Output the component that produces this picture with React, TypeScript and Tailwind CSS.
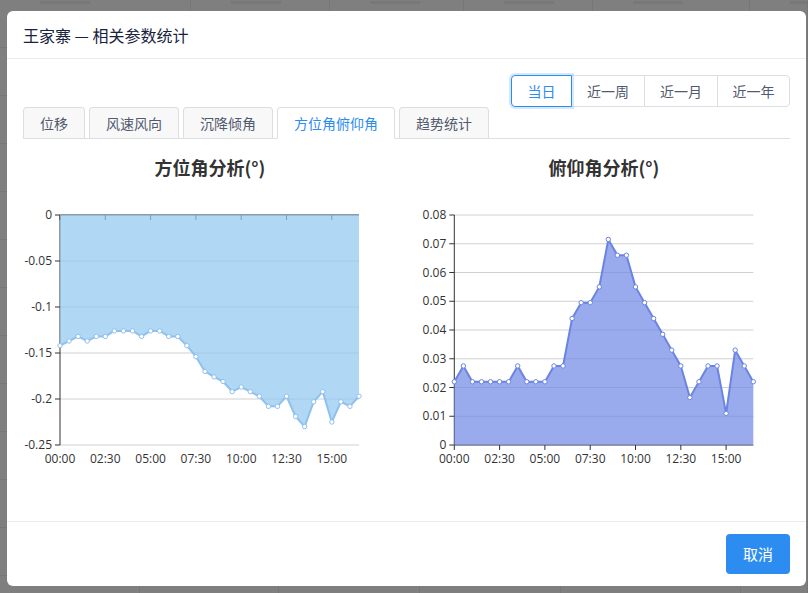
import React from 'react';

const leftData = [
  -0.142, -0.137, -0.132, -0.137, -0.132, -0.132, -0.126, -0.126, -0.126, -0.132, -0.126, -0.126,
  -0.132, -0.132, -0.142, -0.154, -0.17, -0.176, -0.181, -0.192, -0.187, -0.192, -0.197, -0.208,
  -0.208, -0.197, -0.219, -0.23, -0.203, -0.192, -0.225, -0.203, -0.208, -0.197,
];

const rightData = [
  0.022, 0.0275, 0.022, 0.022, 0.022, 0.022, 0.022, 0.0275, 0.022, 0.022, 0.022, 0.0275, 0.0275,
  0.044, 0.0495, 0.0495, 0.055, 0.0715, 0.066, 0.066, 0.055, 0.0495, 0.044, 0.0385, 0.033, 0.0275,
  0.0165, 0.022, 0.0275, 0.0275, 0.011, 0.033, 0.0275, 0.022,
];

const xLabels = ['00:00', '02:30', '05:00', '07:30', '10:00', '12:30', '15:00'];
const rangeBtns = [
  { label: '当日', w: 61 },
  { label: '近一周', w: 74 },
  { label: '近一月', w: 74 },
  { label: '近一年', w: 73 },
];
const tabs = ['位移', '风速风向', '沉降倾角', '方位角俯仰角', '趋势统计'];

const chartFont = '"Open Sans", "Noto Sans CJK SC", sans-serif';

interface ChartProps {
  title: string;
  data: number[];
  ox: number; // svg left in page coords
  width: number;
  axisX: number;
  min: number;
  max: number;
  ticks: number[];
  fmt: (v: number) => string;
  inverted: boolean; // area hangs from the top (negative values)
  fill: string;
  line: string;
  titleX: number;
}

const OY = 139;
const TOP = 215;
const BOTTOM = 445;

function Chart(p: ChartProps) {
  const right = p.axisX + 299;
  const step = (right - p.axisX) / (p.data.length - 1);
  const y = (v: number) => TOP + ((p.max - v) / (p.max - p.min)) * (BOTTOM - TOP);
  const pts = p.data.map((v, i) => [p.axisX + i * step, y(v)] as const);
  const linePts = pts.map(([a, b]) => `${a},${b}`).join(' ');
  const base = p.inverted ? TOP : BOTTOM;
  const areaPts = `${p.axisX},${base} ${linePts} ${right},${base}`;
  const axisColor = '#333';

  return (
    <svg width={p.width} height={382} className="block shrink-0">
      <g transform={`translate(${-p.ox}, ${-OY})`} fontFamily={chartFont}>
        <text
          x={p.titleX}
          y={175}
          textAnchor="middle"
          fontSize={18}
          fontWeight={700}
          fill="#333"
          fontFamily='"Noto Sans CJK SC", "Open Sans", sans-serif'
        >
          {p.title}
        </text>

        {/* grid */}
        {p.ticks.map((t) => {
          const isAxis = p.inverted ? t === p.max : t === p.min;
          return isAxis ? null : (
            <line key={t} x1={p.axisX} x2={right} y1={y(t)} y2={y(t)} stroke="#d0d0d0" strokeWidth={1} />
          );
        })}

        {/* axes */}
        <line x1={p.axisX} x2={p.axisX} y1={TOP} y2={BOTTOM} stroke={axisColor} strokeWidth={1} />
        <line x1={p.axisX} x2={right} y1={base} y2={base} stroke={axisColor} strokeWidth={1} />
        {p.ticks.map((t) => (
          <line key={t} x1={p.axisX - 5} x2={p.axisX} y1={y(t)} y2={y(t)} stroke={axisColor} />
        ))}
        {xLabels.map((l, i) => {
          const x = p.axisX + i * 5 * step;
          return <line key={l} x1={x} x2={x} y1={base} y2={base + 5} stroke={axisColor} />;
        })}

        {/* series */}
        <polygon points={areaPts} fill={p.fill} fillOpacity={0.72} />
        <polyline points={linePts} fill="none" stroke={p.line} strokeWidth={2} strokeLinejoin="round" />
        {pts.map(([a, b], i) => (
          <circle key={i} cx={a} cy={b} r={2.2} fill="#fff" stroke={p.line} strokeWidth={1} />
        ))}

        {/* labels */}
        {p.ticks.map((t) => (
          <text key={t} x={p.axisX - 8} y={y(t) + 4} textAnchor="end" fontSize={12} fill="#333">
            {p.fmt(t)}
          </text>
        ))}
        {xLabels.map((l, i) => (
          <text key={l} x={p.axisX + i * 5 * step} y={463} textAnchor="middle" fontSize={12} fill="#333">
            {l}
          </text>
        ))}
      </g>
    </svg>
  );
}

const fmtNum = (v: number) => (v === 0 ? '0' : String(parseFloat(v.toFixed(3))));

export default function App() {
  const topCells = [191, 139, 134, 129, 157, 58];
  const rowCells = [140, 139, 141, 141, 180, 67];

  return (
    <div
      className="relative h-[593px] w-[808px] overflow-hidden bg-[#7f7f7f]"
      style={{ fontFamily: '"Noto Sans CJK SC", "Noto Sans", sans-serif' }}
    >
      {/* page behind the mask */}
      <div className="flex flex-col">
        <div className="flex h-[48px] border-b border-[#767676]">
          {topCells.map((w, i) => (
            <div key={i} style={{ width: w }} className="flex items-start border-r border-[#777] pl-[40px]">
              <div className="mt-[1px] h-[3px] w-[50px] bg-[#787878]" />
            </div>
          ))}
        </div>
        {Array.from({ length: 12 }).map((_, r) => (
          <div key={r} className="flex h-[48px] border-b border-[#777]">
            {rowCells.map((w, i) => (
              <div key={i} style={{ width: w }} className="border-r border-[#767676]" />
            ))}
          </div>
        ))}
      </div>

      {/* modal */}
      <div className="absolute left-[7px] top-[11px] flex h-[575px] w-[799px] flex-col rounded-[6px] bg-white">
        <div className="flex h-[48px] items-center border-b border-[#e8eaec] px-[16px] text-[16px] text-[#17233d]">
          王家寨 — 相关参数统计
        </div>

        <div className="flex h-[462px] flex-col px-[16px] pt-[16px]">
          <div className="flex justify-end">
            <div className="flex h-[32px] rounded-[4px]">
              {rangeBtns.map((b, i) => {
                const active = i === 0;
                return (
                  <div
                    key={b.label}
                    style={{ width: b.w }}
                    className={
                      active
                        ? 'relative z-10 flex items-center justify-center rounded-l-[4px] border border-[#2d8cf0] text-[14px] text-[#2d8cf0] shadow-[0_0_0_2px_rgba(45,140,240,0.2)]'
                        : i === 3
                          ? '-ml-px flex items-center justify-center rounded-r-[4px] border border-[#dcdee2] text-[14px] text-[#515a6e]'
                          : '-ml-px flex items-center justify-center border border-[#dcdee2] text-[14px] text-[#515a6e]'
                    }
                  >
                    {b.label}
                  </div>
                );
              })}
            </div>
          </div>

          <div className="flex h-[32px] items-end gap-[4px] border-b border-[#dcdee2]">
            {tabs.map((t, i) => {
              const active = i === 3;
              return (
                <div
                  key={t}
                  className={
                    active
                      ? '-mb-px flex h-[32px] items-center rounded-t-[4px] border border-b-white border-[#dcdee2] bg-white px-[16px] text-[14px] text-[#2d8cf0]'
                      : 'flex h-[31px] items-center rounded-t-[4px] border border-b-0 border-[#dcdee2] bg-[#f8f8f9] px-[16px] text-[14px] text-[#515a6e]'
                  }
                >
                  {t}
                </div>
              );
            })}
          </div>

          <div className="flex">
            <Chart
              title="方位角分析(°)"
              data={leftData}
              ox={23}
              width={383}
              axisX={60}
              min={-0.25}
              max={0}
              ticks={[0, -0.05, -0.1, -0.15, -0.2, -0.25]}
              fmt={fmtNum}
              inverted
              fill="#91c7f0"
              line="#8fc1ee"
              titleX={210}
            />
            <Chart
              title="俯仰角分析(°)"
              data={rightData}
              ox={406}
              width={384}
              axisX={454.3}
              min={0}
              max={0.08}
              ticks={[0, 0.01, 0.02, 0.03, 0.04, 0.05, 0.06, 0.07, 0.08]}
              fmt={fmtNum}
              inverted={false}
              fill="#7189e6"
              line="#6b84e2"
              titleX={604}
            />
          </div>
        </div>

        <div className="flex justify-end border-t border-[#e8eaec] px-[16px] py-[12px]">
          <button className="h-[40px] w-[64px] rounded-[4px] bg-[#2d8cf0] text-[15px] text-white">取消</button>
        </div>
      </div>
    </div>
  );
}
